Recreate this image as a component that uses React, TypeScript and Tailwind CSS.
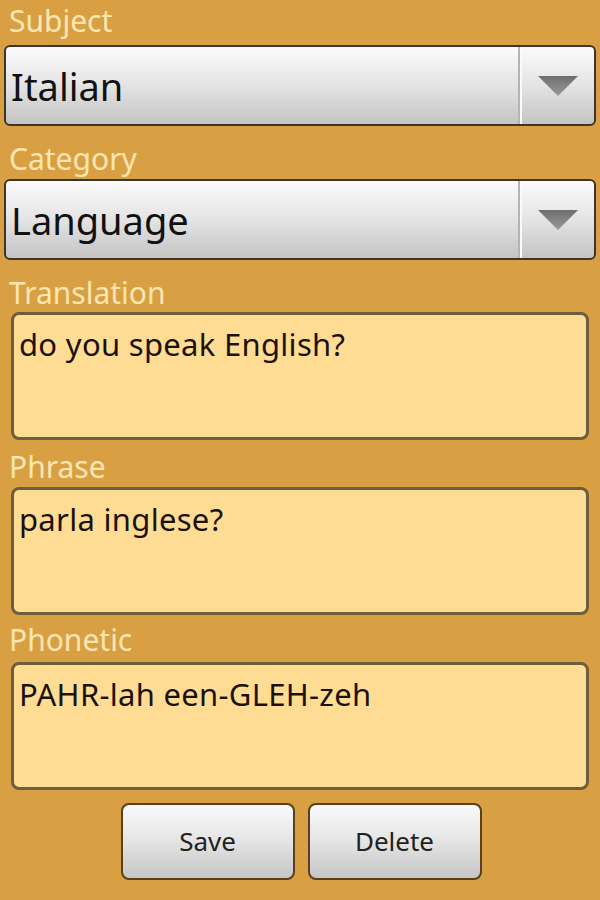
import React from "react";

const font = { fontFamily: '"Noto Sans", "Open Sans", "DejaVu Sans", sans-serif' };

function Label({ text, h, pb }: { text: string; h: string; pb: string }) {
  return (
    <div className={`${h} flex items-end px-[9px] ${pb}`}>
      <span className="text-[30px] leading-none text-[#fce6b3]">{text}</span>
    </div>
  );
}

function Spinner({ value }: { value: string }) {
  return (
    <div className="mx-[4px] h-[81px] flex rounded-[6px] border-2 border-[#3b352c] bg-gradient-to-b from-[#fbfbfb] via-[#e4e4e4] to-[#c4c4c4] overflow-hidden">
      <div className="flex-1 flex items-center pl-[5px]">
        <span className="text-[38px] text-[#111] leading-none">{value}</span>
      </div>
      <div className="w-[2px] bg-[#b4b4b4]" />
      <div className="w-[2px] bg-[#fafafa]" />
      <div className="w-[72px] flex items-center justify-center">
        <svg width="42" height="22" viewBox="0 0 42 22">
          <defs>
            <linearGradient id="tri" x1="0" y1="0" x2="0" y2="1">
              <stop offset="0" stopColor="#6e6e6e" />
              <stop offset="1" stopColor="#9a9a9a" />
            </linearGradient>
          </defs>
          <polygon points="1,1 41,1 21,21" fill="url(#tri)" />
        </svg>
      </div>
    </div>
  );
}

function TextBox({ value }: { value: string }) {
  return (
    <div className="mx-[11px] h-[128px] rounded-[8px] border-[3px] border-[#6e5e3e] bg-[#ffdc93] px-[5px] pt-[14px]">
      <span className="text-[31px] leading-none text-[#1a1208] tracking-[0.3px]">{value}</span>
    </div>
  );
}

function Button({ label }: { label: string }) {
  return (
    <div className="w-[174px] h-[77px] rounded-[8px] border-2 border-[#5b3f1c] bg-gradient-to-b from-[#fafafa] via-[#e4e4e4] to-[#c6c6c6] flex items-center justify-center">
      <span className="text-[26px] text-[#222]">{label}</span>
    </div>
  );
}

export default function App() {
  return (
    <div className="w-[600px] h-[900px] bg-[#d9a043] flex flex-col overflow-hidden" style={font}>
      <Label text="Subject" h="h-[45px]" pb="pb-[9px]" />
      <Spinner value="Italian" />
      <Label text="Category" h="h-[53px]" pb="pb-[5px]" />
      <Spinner value="Language" />
      <Label text="Translation" h="h-[52px]" pb="pb-[4px]" />
      <TextBox value="do you speak English?" />
      <Label text="Phrase" h="h-[47px]" pb="pb-[5px]" />
      <TextBox value="parla inglese?" />
      <Label text="Phonetic" h="h-[47px]" pb="pb-[7px]" />
      <TextBox value="PAHR-lah een-GLEH-zeh" />
      <div className="flex justify-center gap-[13px] pt-[13px] pl-[2px]">
        <Button label="Save" />
        <Button label="Delete" />
      </div>
    </div>
  );
}
